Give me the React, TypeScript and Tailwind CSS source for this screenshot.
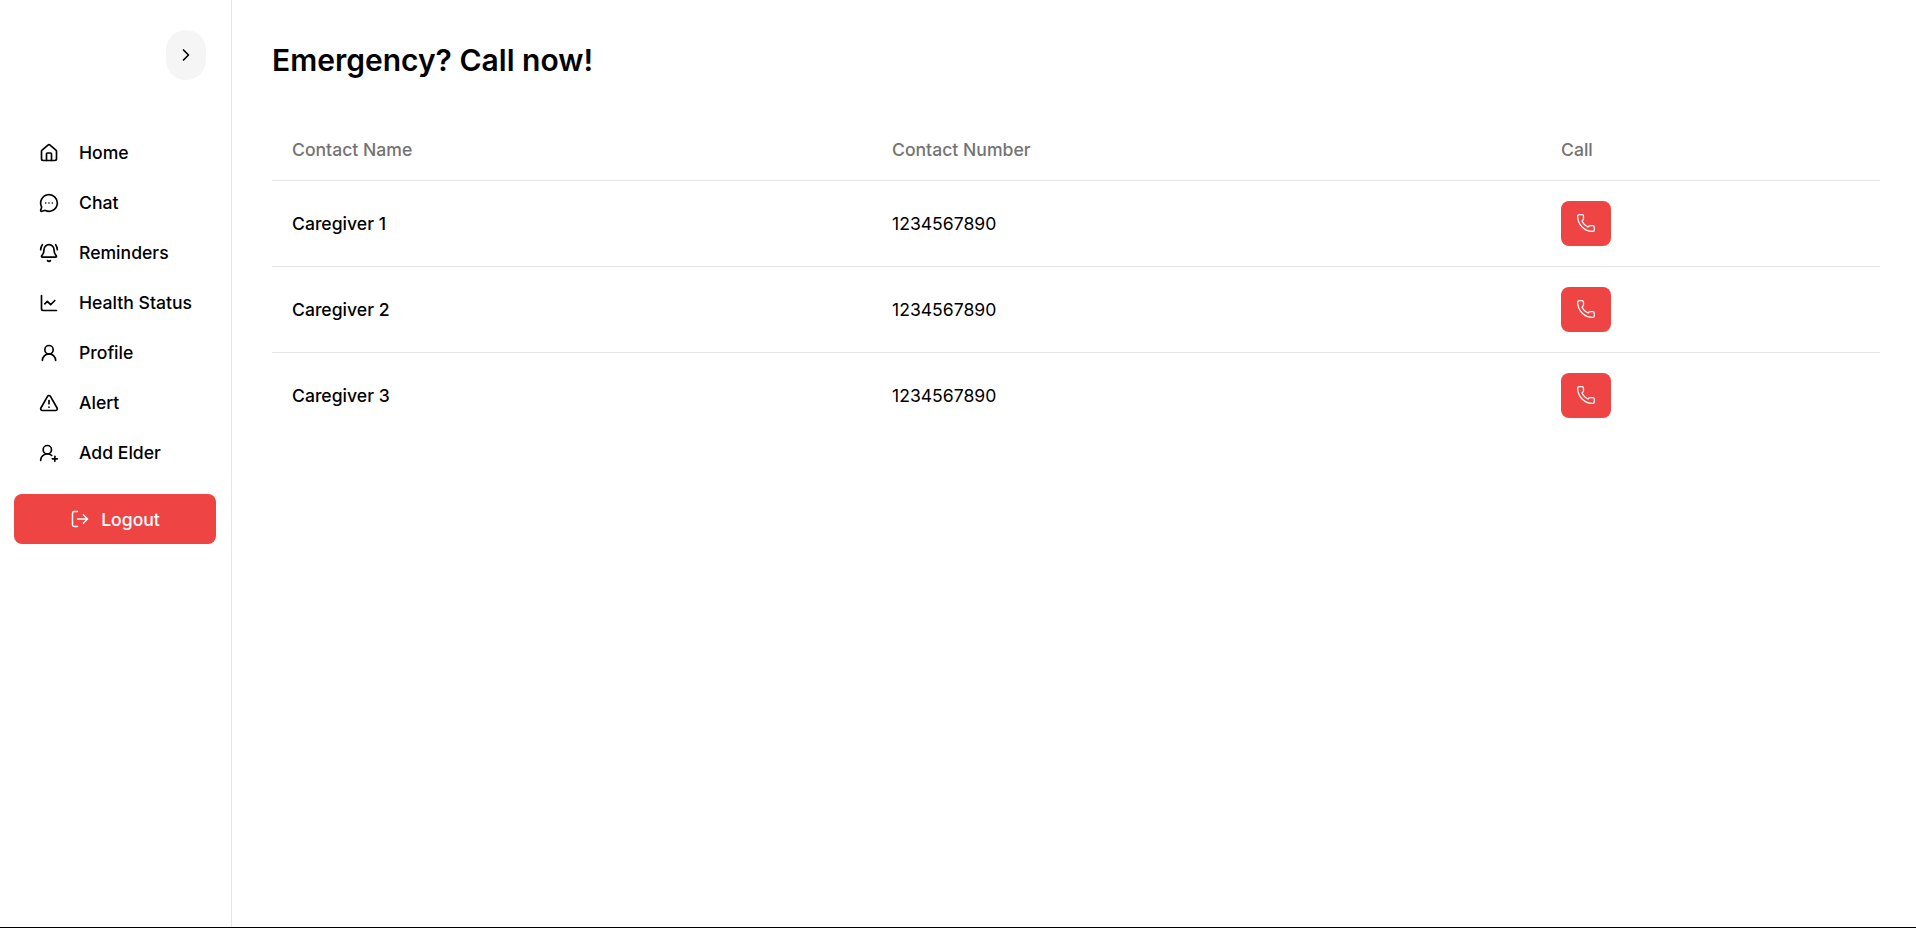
import { ChevronRight, LogOut, Phone, House, MessageCircleMore, BellRing, ChartLine, UserRound, TriangleAlert, UserRoundPlus } from "lucide-react";

const navItems = [
  { label: "Home", Icon: House },
  { label: "Chat", Icon: MessageCircleMore },
  { label: "Reminders", Icon: BellRing },
  { label: "Health Status", Icon: ChartLine },
  { label: "Profile", Icon: UserRound },
  { label: "Alert", Icon: TriangleAlert },
  { label: "Add Elder", Icon: UserRoundPlus },
];

const contacts = ["Caregiver 1", "Caregiver 2", "Caregiver 3"];

const App = () => {
  return (
    <div className="flex h-[928px] w-full border-b border-black bg-white font-['Inter',sans-serif] text-black">
      <aside className="flex w-[232px] shrink-0 flex-col border-r border-[#e5e5e5] px-[14px] pt-[30px]">
        <div className="flex justify-end pr-[11px]">
          <button className="flex h-[50px] w-[40px] items-center justify-center rounded-[20px] bg-[#f5f5f5]">
            <ChevronRight size={20} strokeWidth={2} />
          </button>
        </div>

        <nav className="mt-[48px] flex flex-col">
          {navItems.map(({ label, Icon }) => (
            <a key={label} className="flex h-[50px] items-center gap-[20px] pl-[25px] text-[17.6px] font-medium">
              <Icon size={20} strokeWidth={2} />
              <span>{label}</span>
            </a>
          ))}
        </nav>

        <button className="mt-[16px] flex h-[50px] w-[202px] items-center justify-center gap-[11px] rounded-lg bg-[#ef4444] text-[17.6px] font-medium text-white">
          <LogOut size={20} strokeWidth={1.75} />
          <span className="pt-[2px]">Logout</span>
        </button>
      </aside>

      <main className="min-w-0 flex-1 pl-[40px] pr-[36px] pt-[42px]">
        <h1 className="text-3xl font-semibold leading-9">Emergency? Call now!</h1>

        <table className="mt-[40px] w-full table-fixed border-collapse text-left">
          <thead>
            <tr className="h-[62px] border-b border-[#e5e5e5] text-[17.6px] font-medium text-[#737373]">
              <th className="w-[600px] pl-[20px] pt-[2px] font-medium">Contact Name</th>
              <th className="w-[669px] pl-[20px] pt-[2px] font-medium">Contact Number</th>
              <th className="pl-[20px] pt-[2px] font-medium">Call</th>
            </tr>
          </thead>
          <tbody>
            {contacts.map((name) => (
              <tr key={name} className="h-[86px] border-b border-[#e5e5e5] text-[17.6px] last:border-b-0">
                <td className="pl-[20px] pt-[2px] font-medium">{name}</td>
                <td className="pl-[20px] pt-[2px]">1234567890</td>
                <td className="pl-[20px]">
                  <button className="flex h-[45px] w-[50px] items-center justify-center rounded-lg bg-[#ef4444] text-white">
                    <Phone size={20} strokeWidth={1.5} />
                  </button>
                </td>
              </tr>
            ))}
          </tbody>
        </table>
      </main>
    </div>
  );
};

export default App;
